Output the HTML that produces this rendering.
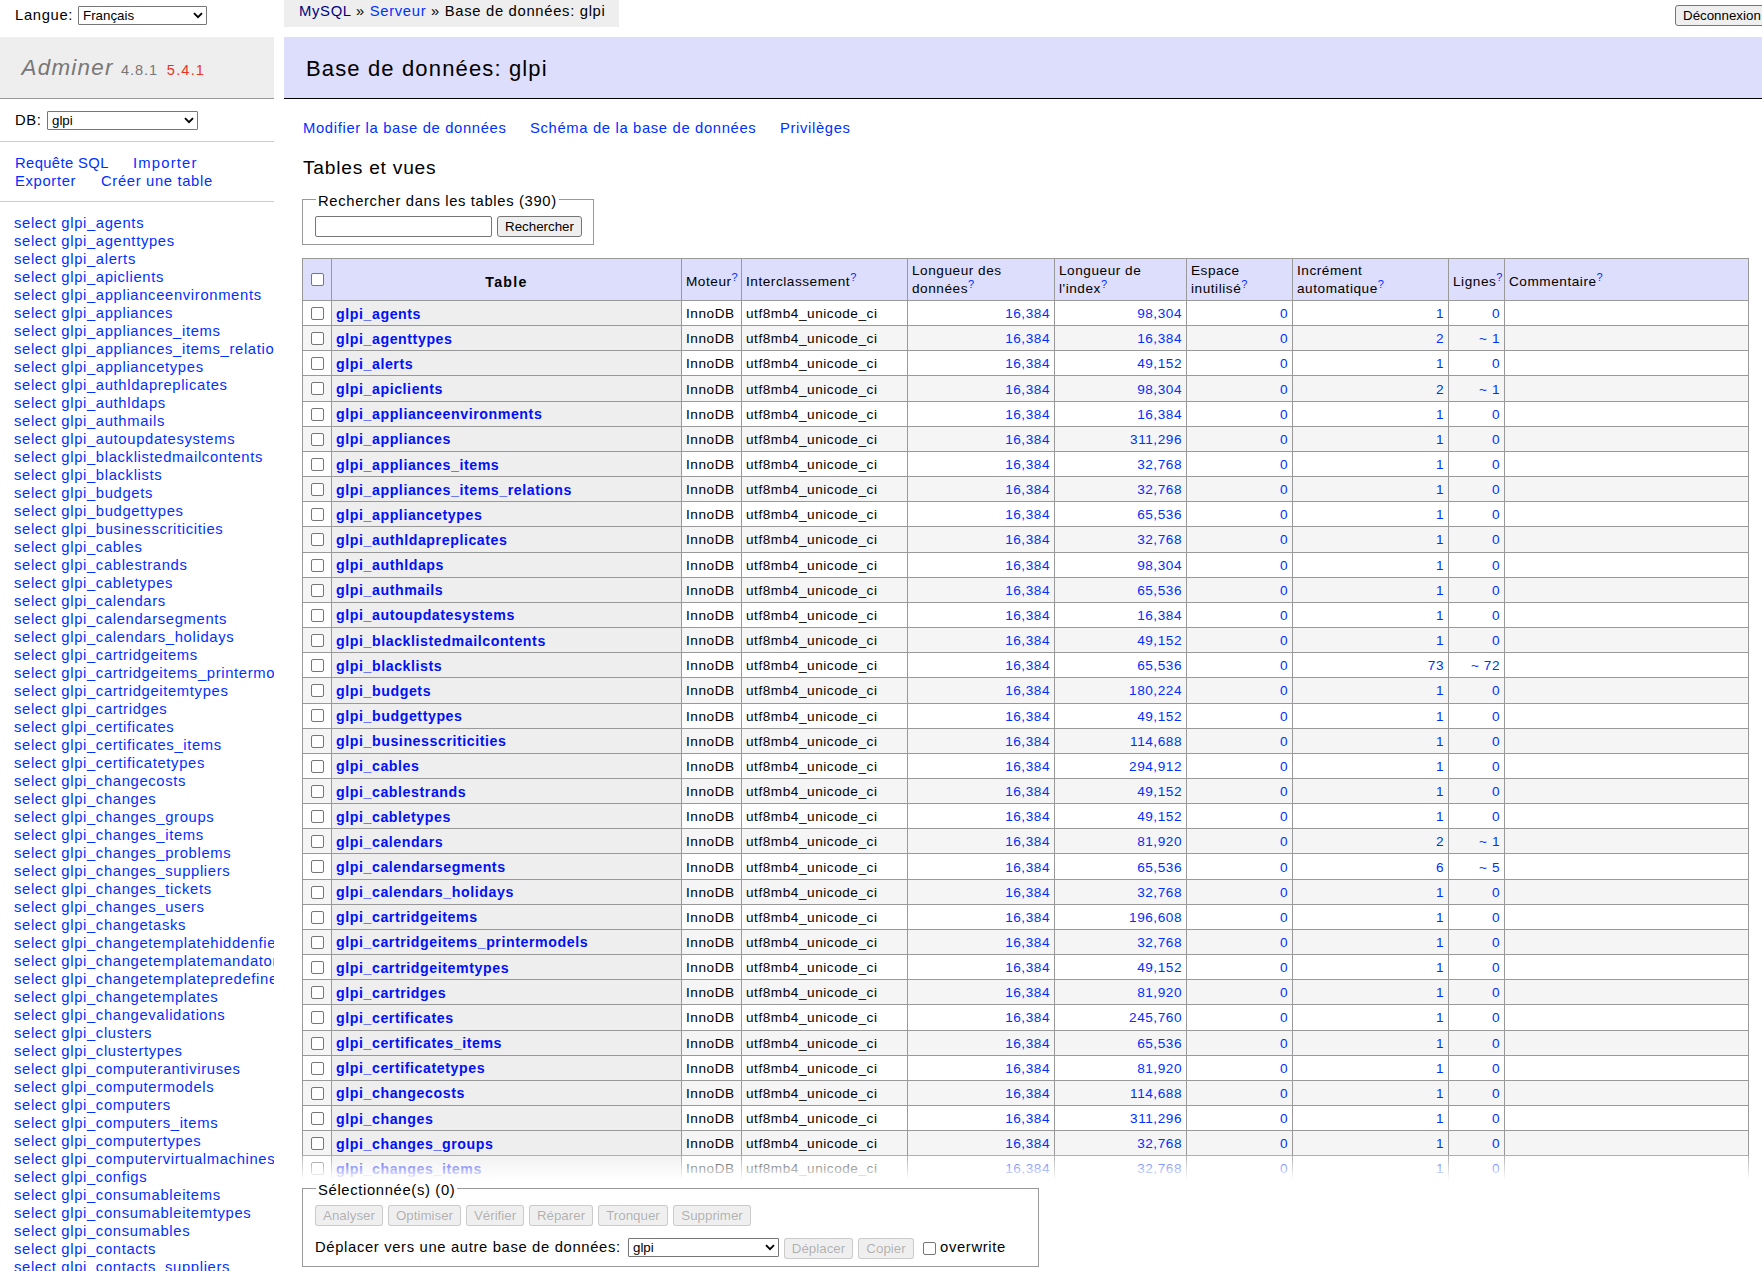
<!DOCTYPE html>
<html lang="fr"><head><meta charset="utf-8"><title>Adminer</title>
<style>
html, body { margin: 0; padding: 0; }
body { width: 1762px; height: 1271px; overflow: hidden; position: relative; background: #fff; color: #000;
  font-family: "Liberation Sans", sans-serif; font-size: 14.8px; line-height: 18px; letter-spacing: 0.044em; }
a { color: #0030ff; text-decoration: none; }
a.v { color: #000080; }
.abs { position: absolute; }
/* selects & buttons */
.sel { position: absolute; box-sizing: border-box; border: 1px solid #767676; border-radius: 1px; background: #fff;
  font-size: 13.33px; letter-spacing: 0; line-height: 17px; color: #000; padding-left: 4px; white-space: nowrap; }
.sel .arr { position: absolute; top: 50%; right: 3.5px; width: 10px; height: 7px; margin-top: -4px; }
.btn { position: absolute; box-sizing: border-box; border: 1px solid #767676; border-radius: 3px; background: #efefef;
  font-size: 13.33px; letter-spacing: 0; line-height: 18px; color: #000; text-align: center; white-space: nowrap; }
.btn.dis { border-color: rgba(118,118,118,0.3); background: #efefef; color: rgba(16,16,16,0.3); line-height: 19px; }
.inp { position: absolute; box-sizing: border-box; border: 1px solid #767676; border-radius: 2px; background: #fff; }
.chk { display: inline-block; box-sizing: border-box; width: 13px; height: 13px; border: 1px solid #767676; border-radius: 2px; background: #fff; }

/* menu */
#h1 { position: absolute; left: 0; top: 37px; width: 274px; height: 61px; background: #eee; border-bottom: 1px solid #999; }
#h1 .t { position: absolute; left: 21.6px; top: 0; line-height: 61px; font-size: 22.4px; font-style: italic; color: #777; letter-spacing: 0.055em; white-space: nowrap; }
#h1 .t .ver { font-size: 14.6px; font-style: normal; color: #777; letter-spacing: 0.06em; }
#h1 .t .nv { font-size: 14.6px; font-style: normal; color: #ea3323; letter-spacing: 0.08em; margin-left: 1.5px; }
.hr { position: absolute; left: 0; width: 274px; height: 1px; background: #ccc; }
#tables { position: absolute; left: 0; top: 214px; width: 274px; overflow: hidden; margin: 0; padding: 0; list-style: none; white-space: nowrap; }
#tables li { height: 18px; line-height: 18px; padding-left: 14px; }

/* content */
#breadcrumb { position: absolute; left: 284px; top: 0; width: 335px; height: 27px; background: #eee; white-space: nowrap; }
#breadcrumb span { position: absolute; left: 15px; top: 2px; letter-spacing: 0.046em; line-height: 18px; }
#h2 { position: absolute; left: 284px; top: 37px; width: 1478px; height: 61px; background: #ddddfc; border-bottom: 1px solid #000; }
#h2 span { position: absolute; left: 22px; top: 1px; line-height: 61px; font-size: 22px; letter-spacing: 0.052em; white-space: nowrap; }
.links a { position: absolute; white-space: nowrap; }
h3 { position: absolute; margin: 0; font-weight: normal; font-size: 19.2px; letter-spacing: 0.04em; white-space: nowrap; }
fieldset { position: absolute; box-sizing: border-box; margin: 0; padding: 0; border: 1px solid #999; }
legend { position: absolute; left: 13px; top: -8px; padding: 0 2px; background: #fff; white-space: nowrap; line-height: 18px; }

/* table */
table { position: absolute; left: 302px; top: 258px; border-collapse: collapse; table-layout: fixed; width: 1447px;
  font-size: 13.6px; letter-spacing: 0.04em; }
td, th { border: 1px solid #999; padding: 2px 4px 0; height: 25.16px; line-height: 16px; white-space: nowrap; overflow: hidden; box-sizing: border-box; }
th { background: #eee; text-align: left; font-weight: bold; }
th a { font-weight: bold; font-size: 14.2px; letter-spacing: 0.04em; color: #0010f8; }
thead th.tn { letter-spacing: 0.09em; font-size: 14.2px; }
thead th, thead td { background: #ddddfc; height: 42px; font-weight: normal; text-align: left; padding: 0 4px; line-height: 18px; white-space: normal; vertical-align: middle; }
thead th.tn { text-align: center; font-weight: bold; }
tbody tr.even td { background: #f5f5f5; }
td.n { text-align: right; }
td.cb { padding: 0; text-align: center; }
td.cb .chk { vertical-align: middle; margin-top: 0px; }
sup { font-size: 11px; line-height: 0; vertical-align: 5px; letter-spacing: 0; }
thead .s1 { padding-top: 5px; }
sup a { color: #0030ff; }

/* footer */
#fade { position: absolute; left: 284px; top: 1155px; width: 1478px; height: 25px;
  background: linear-gradient(rgba(255,255,255,0.2), #fff); }
#footer { position: absolute; left: 284px; top: 1180px; width: 1478px; height: 91px; background: #fff; }

</style></head>
<body>
<div id="lang">
  <span class="abs" style="left:15px;top:6px;">Langue:</span>
  <div class="sel" style="left:78px;top:6px;width:129px;height:19px;">Français<svg class="arr" viewBox="0 0 10 7"><path d="M1 1.2 L5 5.2 L9 1.2" fill="none" stroke="#000" stroke-width="1.9"/></svg></div>
</div>
<div class="btn" style="left:1675px;top:5px;width:110px;height:21px;text-align:left;padding-left:7px;line-height:20px;">Déconnexion</div>

<div id="h1"><span class="t">Adminer <span class="ver">4.8.1</span> <span class="nv">5.4.1</span></span></div>
<span class="abs" style="left:15px;top:111px;">DB:</span>
<div class="sel" style="left:47px;top:111px;width:151px;height:19px;">glpi<svg class="arr" viewBox="0 0 10 7"><path d="M1 1.2 L5 5.2 L9 1.2" fill="none" stroke="#000" stroke-width="1.9"/></svg></div>
<div class="hr" style="top:141px;"></div>
<div class="links">
  <a href="#" style="left:15px;top:154px;letter-spacing:0.025em;">Requête SQL</a>
  <a href="#" style="left:133px;top:154px;letter-spacing:0.08em;">Importer</a>
  <a href="#" style="left:15px;top:172px;">Exporter</a>
  <a href="#" style="left:101px;top:172px;">Créer une table</a>
</div>
<div class="hr" style="top:201px;"></div>
<ul id="tables">
<li><a href="#">select glpi_agents</a></li>
<li><a href="#">select glpi_agenttypes</a></li>
<li><a href="#">select glpi_alerts</a></li>
<li><a href="#">select glpi_apiclients</a></li>
<li><a href="#">select glpi_applianceenvironments</a></li>
<li><a href="#">select glpi_appliances</a></li>
<li><a href="#">select glpi_appliances_items</a></li>
<li><a href="#">select glpi_appliances_items_relations</a></li>
<li><a href="#">select glpi_appliancetypes</a></li>
<li><a href="#">select glpi_authldapreplicates</a></li>
<li><a href="#">select glpi_authldaps</a></li>
<li><a href="#">select glpi_authmails</a></li>
<li><a href="#">select glpi_autoupdatesystems</a></li>
<li><a href="#">select glpi_blacklistedmailcontents</a></li>
<li><a href="#">select glpi_blacklists</a></li>
<li><a href="#">select glpi_budgets</a></li>
<li><a href="#">select glpi_budgettypes</a></li>
<li><a href="#">select glpi_businesscriticities</a></li>
<li><a href="#">select glpi_cables</a></li>
<li><a href="#">select glpi_cablestrands</a></li>
<li><a href="#">select glpi_cabletypes</a></li>
<li><a href="#">select glpi_calendars</a></li>
<li><a href="#">select glpi_calendarsegments</a></li>
<li><a href="#">select glpi_calendars_holidays</a></li>
<li><a href="#">select glpi_cartridgeitems</a></li>
<li><a href="#">select glpi_cartridgeitems_printermodels</a></li>
<li><a href="#">select glpi_cartridgeitemtypes</a></li>
<li><a href="#">select glpi_cartridges</a></li>
<li><a href="#">select glpi_certificates</a></li>
<li><a href="#">select glpi_certificates_items</a></li>
<li><a href="#">select glpi_certificatetypes</a></li>
<li><a href="#">select glpi_changecosts</a></li>
<li><a href="#">select glpi_changes</a></li>
<li><a href="#">select glpi_changes_groups</a></li>
<li><a href="#">select glpi_changes_items</a></li>
<li><a href="#">select glpi_changes_problems</a></li>
<li><a href="#">select glpi_changes_suppliers</a></li>
<li><a href="#">select glpi_changes_tickets</a></li>
<li><a href="#">select glpi_changes_users</a></li>
<li><a href="#">select glpi_changetasks</a></li>
<li><a href="#">select glpi_changetemplatehiddenfields</a></li>
<li><a href="#">select glpi_changetemplatemandatoryfields</a></li>
<li><a href="#">select glpi_changetemplatepredefinedfields</a></li>
<li><a href="#">select glpi_changetemplates</a></li>
<li><a href="#">select glpi_changevalidations</a></li>
<li><a href="#">select glpi_clusters</a></li>
<li><a href="#">select glpi_clustertypes</a></li>
<li><a href="#">select glpi_computerantiviruses</a></li>
<li><a href="#">select glpi_computermodels</a></li>
<li><a href="#">select glpi_computers</a></li>
<li><a href="#">select glpi_computers_items</a></li>
<li><a href="#">select glpi_computertypes</a></li>
<li><a href="#">select glpi_computervirtualmachines</a></li>
<li><a href="#">select glpi_configs</a></li>
<li><a href="#">select glpi_consumableitems</a></li>
<li><a href="#">select glpi_consumableitemtypes</a></li>
<li><a href="#">select glpi_consumables</a></li>
<li><a href="#">select glpi_contacts</a></li>
<li><a href="#">select glpi_contacts_suppliers</a></li>
</ul>

<div id="breadcrumb"><span><a class="v" href="#">MySQL</a> » <a href="#">Serveur</a> » Base de données: glpi</span></div>
<div id="h2"><span>Base de données: glpi</span></div>
<div class="links">
  <a href="#" style="left:303px;top:119px;">Modifier la base de données</a>
  <a href="#" style="left:530px;top:119px;">Schéma de la base de données</a>
  <a href="#" style="left:780px;top:119px;">Privilèges</a>
</div>
<h3 style="left:303px;top:159px;">Tables et vues</h3>
<fieldset style="left:302px;top:199px;width:292px;height:46px;">
  <legend>Rechercher dans les tables (390)</legend>
  <div class="inp" style="left:12px;top:16px;width:177px;height:21px;"></div>
  <div class="btn" style="left:194px;top:16px;width:85px;height:21px;line-height:20px;">Rechercher</div>
</fieldset>

<table>
<colgroup><col style="width:29px"><col style="width:350px"><col style="width:60px"><col style="width:166px"><col style="width:147px"><col style="width:132px"><col style="width:106px"><col style="width:156px"><col style="width:56px"><col style="width:244px"></colgroup>
<thead><tr>
<td class="cb"><span class="chk"></span></td>
<th class="tn s1">Table</th>
<td class="s1">Moteur<sup><a href="#">?</a></sup></td>
<td class="s1">Interclassement<sup><a href="#">?</a></sup></td>
<td>Longueur des données<sup><a href="#">?</a></sup></td>
<td>Longueur de l'index<sup><a href="#">?</a></sup></td>
<td>Espace inutilisé<sup><a href="#">?</a></sup></td>
<td>Incrément automatique<sup><a href="#">?</a></sup></td>
<td class="s1">Lignes<sup><a href="#">?</a></sup></td>
<td class="s1">Commentaire<sup><a href="#">?</a></sup></td>
</tr></thead>
<tbody>
<tr><td class="cb"><span class="chk"></span></td><th><a href="#">glpi_agents</a></th><td>InnoDB</td><td>utf8mb4_unicode_ci</td><td class="n"><a href="#">16,384</a></td><td class="n"><a href="#">98,304</a></td><td class="n"><a href="#">0</a></td><td class="n"><a href="#">1</a></td><td class="n"><a href="#">0</a></td><td></td></tr>
<tr class="even"><td class="cb"><span class="chk"></span></td><th><a href="#">glpi_agenttypes</a></th><td>InnoDB</td><td>utf8mb4_unicode_ci</td><td class="n"><a href="#">16,384</a></td><td class="n"><a href="#">16,384</a></td><td class="n"><a href="#">0</a></td><td class="n"><a href="#">2</a></td><td class="n"><a href="#">~ 1</a></td><td></td></tr>
<tr><td class="cb"><span class="chk"></span></td><th><a href="#">glpi_alerts</a></th><td>InnoDB</td><td>utf8mb4_unicode_ci</td><td class="n"><a href="#">16,384</a></td><td class="n"><a href="#">49,152</a></td><td class="n"><a href="#">0</a></td><td class="n"><a href="#">1</a></td><td class="n"><a href="#">0</a></td><td></td></tr>
<tr class="even"><td class="cb"><span class="chk"></span></td><th><a href="#">glpi_apiclients</a></th><td>InnoDB</td><td>utf8mb4_unicode_ci</td><td class="n"><a href="#">16,384</a></td><td class="n"><a href="#">98,304</a></td><td class="n"><a href="#">0</a></td><td class="n"><a href="#">2</a></td><td class="n"><a href="#">~ 1</a></td><td></td></tr>
<tr><td class="cb"><span class="chk"></span></td><th><a href="#">glpi_applianceenvironments</a></th><td>InnoDB</td><td>utf8mb4_unicode_ci</td><td class="n"><a href="#">16,384</a></td><td class="n"><a href="#">16,384</a></td><td class="n"><a href="#">0</a></td><td class="n"><a href="#">1</a></td><td class="n"><a href="#">0</a></td><td></td></tr>
<tr class="even"><td class="cb"><span class="chk"></span></td><th><a href="#">glpi_appliances</a></th><td>InnoDB</td><td>utf8mb4_unicode_ci</td><td class="n"><a href="#">16,384</a></td><td class="n"><a href="#">311,296</a></td><td class="n"><a href="#">0</a></td><td class="n"><a href="#">1</a></td><td class="n"><a href="#">0</a></td><td></td></tr>
<tr><td class="cb"><span class="chk"></span></td><th><a href="#">glpi_appliances_items</a></th><td>InnoDB</td><td>utf8mb4_unicode_ci</td><td class="n"><a href="#">16,384</a></td><td class="n"><a href="#">32,768</a></td><td class="n"><a href="#">0</a></td><td class="n"><a href="#">1</a></td><td class="n"><a href="#">0</a></td><td></td></tr>
<tr class="even"><td class="cb"><span class="chk"></span></td><th><a href="#">glpi_appliances_items_relations</a></th><td>InnoDB</td><td>utf8mb4_unicode_ci</td><td class="n"><a href="#">16,384</a></td><td class="n"><a href="#">32,768</a></td><td class="n"><a href="#">0</a></td><td class="n"><a href="#">1</a></td><td class="n"><a href="#">0</a></td><td></td></tr>
<tr><td class="cb"><span class="chk"></span></td><th><a href="#">glpi_appliancetypes</a></th><td>InnoDB</td><td>utf8mb4_unicode_ci</td><td class="n"><a href="#">16,384</a></td><td class="n"><a href="#">65,536</a></td><td class="n"><a href="#">0</a></td><td class="n"><a href="#">1</a></td><td class="n"><a href="#">0</a></td><td></td></tr>
<tr class="even"><td class="cb"><span class="chk"></span></td><th><a href="#">glpi_authldapreplicates</a></th><td>InnoDB</td><td>utf8mb4_unicode_ci</td><td class="n"><a href="#">16,384</a></td><td class="n"><a href="#">32,768</a></td><td class="n"><a href="#">0</a></td><td class="n"><a href="#">1</a></td><td class="n"><a href="#">0</a></td><td></td></tr>
<tr><td class="cb"><span class="chk"></span></td><th><a href="#">glpi_authldaps</a></th><td>InnoDB</td><td>utf8mb4_unicode_ci</td><td class="n"><a href="#">16,384</a></td><td class="n"><a href="#">98,304</a></td><td class="n"><a href="#">0</a></td><td class="n"><a href="#">1</a></td><td class="n"><a href="#">0</a></td><td></td></tr>
<tr class="even"><td class="cb"><span class="chk"></span></td><th><a href="#">glpi_authmails</a></th><td>InnoDB</td><td>utf8mb4_unicode_ci</td><td class="n"><a href="#">16,384</a></td><td class="n"><a href="#">65,536</a></td><td class="n"><a href="#">0</a></td><td class="n"><a href="#">1</a></td><td class="n"><a href="#">0</a></td><td></td></tr>
<tr><td class="cb"><span class="chk"></span></td><th><a href="#">glpi_autoupdatesystems</a></th><td>InnoDB</td><td>utf8mb4_unicode_ci</td><td class="n"><a href="#">16,384</a></td><td class="n"><a href="#">16,384</a></td><td class="n"><a href="#">0</a></td><td class="n"><a href="#">1</a></td><td class="n"><a href="#">0</a></td><td></td></tr>
<tr class="even"><td class="cb"><span class="chk"></span></td><th><a href="#">glpi_blacklistedmailcontents</a></th><td>InnoDB</td><td>utf8mb4_unicode_ci</td><td class="n"><a href="#">16,384</a></td><td class="n"><a href="#">49,152</a></td><td class="n"><a href="#">0</a></td><td class="n"><a href="#">1</a></td><td class="n"><a href="#">0</a></td><td></td></tr>
<tr><td class="cb"><span class="chk"></span></td><th><a href="#">glpi_blacklists</a></th><td>InnoDB</td><td>utf8mb4_unicode_ci</td><td class="n"><a href="#">16,384</a></td><td class="n"><a href="#">65,536</a></td><td class="n"><a href="#">0</a></td><td class="n"><a href="#">73</a></td><td class="n"><a href="#">~ 72</a></td><td></td></tr>
<tr class="even"><td class="cb"><span class="chk"></span></td><th><a href="#">glpi_budgets</a></th><td>InnoDB</td><td>utf8mb4_unicode_ci</td><td class="n"><a href="#">16,384</a></td><td class="n"><a href="#">180,224</a></td><td class="n"><a href="#">0</a></td><td class="n"><a href="#">1</a></td><td class="n"><a href="#">0</a></td><td></td></tr>
<tr><td class="cb"><span class="chk"></span></td><th><a href="#">glpi_budgettypes</a></th><td>InnoDB</td><td>utf8mb4_unicode_ci</td><td class="n"><a href="#">16,384</a></td><td class="n"><a href="#">49,152</a></td><td class="n"><a href="#">0</a></td><td class="n"><a href="#">1</a></td><td class="n"><a href="#">0</a></td><td></td></tr>
<tr class="even"><td class="cb"><span class="chk"></span></td><th><a href="#">glpi_businesscriticities</a></th><td>InnoDB</td><td>utf8mb4_unicode_ci</td><td class="n"><a href="#">16,384</a></td><td class="n"><a href="#">114,688</a></td><td class="n"><a href="#">0</a></td><td class="n"><a href="#">1</a></td><td class="n"><a href="#">0</a></td><td></td></tr>
<tr><td class="cb"><span class="chk"></span></td><th><a href="#">glpi_cables</a></th><td>InnoDB</td><td>utf8mb4_unicode_ci</td><td class="n"><a href="#">16,384</a></td><td class="n"><a href="#">294,912</a></td><td class="n"><a href="#">0</a></td><td class="n"><a href="#">1</a></td><td class="n"><a href="#">0</a></td><td></td></tr>
<tr class="even"><td class="cb"><span class="chk"></span></td><th><a href="#">glpi_cablestrands</a></th><td>InnoDB</td><td>utf8mb4_unicode_ci</td><td class="n"><a href="#">16,384</a></td><td class="n"><a href="#">49,152</a></td><td class="n"><a href="#">0</a></td><td class="n"><a href="#">1</a></td><td class="n"><a href="#">0</a></td><td></td></tr>
<tr><td class="cb"><span class="chk"></span></td><th><a href="#">glpi_cabletypes</a></th><td>InnoDB</td><td>utf8mb4_unicode_ci</td><td class="n"><a href="#">16,384</a></td><td class="n"><a href="#">49,152</a></td><td class="n"><a href="#">0</a></td><td class="n"><a href="#">1</a></td><td class="n"><a href="#">0</a></td><td></td></tr>
<tr class="even"><td class="cb"><span class="chk"></span></td><th><a href="#">glpi_calendars</a></th><td>InnoDB</td><td>utf8mb4_unicode_ci</td><td class="n"><a href="#">16,384</a></td><td class="n"><a href="#">81,920</a></td><td class="n"><a href="#">0</a></td><td class="n"><a href="#">2</a></td><td class="n"><a href="#">~ 1</a></td><td></td></tr>
<tr><td class="cb"><span class="chk"></span></td><th><a href="#">glpi_calendarsegments</a></th><td>InnoDB</td><td>utf8mb4_unicode_ci</td><td class="n"><a href="#">16,384</a></td><td class="n"><a href="#">65,536</a></td><td class="n"><a href="#">0</a></td><td class="n"><a href="#">6</a></td><td class="n"><a href="#">~ 5</a></td><td></td></tr>
<tr class="even"><td class="cb"><span class="chk"></span></td><th><a href="#">glpi_calendars_holidays</a></th><td>InnoDB</td><td>utf8mb4_unicode_ci</td><td class="n"><a href="#">16,384</a></td><td class="n"><a href="#">32,768</a></td><td class="n"><a href="#">0</a></td><td class="n"><a href="#">1</a></td><td class="n"><a href="#">0</a></td><td></td></tr>
<tr><td class="cb"><span class="chk"></span></td><th><a href="#">glpi_cartridgeitems</a></th><td>InnoDB</td><td>utf8mb4_unicode_ci</td><td class="n"><a href="#">16,384</a></td><td class="n"><a href="#">196,608</a></td><td class="n"><a href="#">0</a></td><td class="n"><a href="#">1</a></td><td class="n"><a href="#">0</a></td><td></td></tr>
<tr class="even"><td class="cb"><span class="chk"></span></td><th><a href="#">glpi_cartridgeitems_printermodels</a></th><td>InnoDB</td><td>utf8mb4_unicode_ci</td><td class="n"><a href="#">16,384</a></td><td class="n"><a href="#">32,768</a></td><td class="n"><a href="#">0</a></td><td class="n"><a href="#">1</a></td><td class="n"><a href="#">0</a></td><td></td></tr>
<tr><td class="cb"><span class="chk"></span></td><th><a href="#">glpi_cartridgeitemtypes</a></th><td>InnoDB</td><td>utf8mb4_unicode_ci</td><td class="n"><a href="#">16,384</a></td><td class="n"><a href="#">49,152</a></td><td class="n"><a href="#">0</a></td><td class="n"><a href="#">1</a></td><td class="n"><a href="#">0</a></td><td></td></tr>
<tr class="even"><td class="cb"><span class="chk"></span></td><th><a href="#">glpi_cartridges</a></th><td>InnoDB</td><td>utf8mb4_unicode_ci</td><td class="n"><a href="#">16,384</a></td><td class="n"><a href="#">81,920</a></td><td class="n"><a href="#">0</a></td><td class="n"><a href="#">1</a></td><td class="n"><a href="#">0</a></td><td></td></tr>
<tr><td class="cb"><span class="chk"></span></td><th><a href="#">glpi_certificates</a></th><td>InnoDB</td><td>utf8mb4_unicode_ci</td><td class="n"><a href="#">16,384</a></td><td class="n"><a href="#">245,760</a></td><td class="n"><a href="#">0</a></td><td class="n"><a href="#">1</a></td><td class="n"><a href="#">0</a></td><td></td></tr>
<tr class="even"><td class="cb"><span class="chk"></span></td><th><a href="#">glpi_certificates_items</a></th><td>InnoDB</td><td>utf8mb4_unicode_ci</td><td class="n"><a href="#">16,384</a></td><td class="n"><a href="#">65,536</a></td><td class="n"><a href="#">0</a></td><td class="n"><a href="#">1</a></td><td class="n"><a href="#">0</a></td><td></td></tr>
<tr><td class="cb"><span class="chk"></span></td><th><a href="#">glpi_certificatetypes</a></th><td>InnoDB</td><td>utf8mb4_unicode_ci</td><td class="n"><a href="#">16,384</a></td><td class="n"><a href="#">81,920</a></td><td class="n"><a href="#">0</a></td><td class="n"><a href="#">1</a></td><td class="n"><a href="#">0</a></td><td></td></tr>
<tr class="even"><td class="cb"><span class="chk"></span></td><th><a href="#">glpi_changecosts</a></th><td>InnoDB</td><td>utf8mb4_unicode_ci</td><td class="n"><a href="#">16,384</a></td><td class="n"><a href="#">114,688</a></td><td class="n"><a href="#">0</a></td><td class="n"><a href="#">1</a></td><td class="n"><a href="#">0</a></td><td></td></tr>
<tr><td class="cb"><span class="chk"></span></td><th><a href="#">glpi_changes</a></th><td>InnoDB</td><td>utf8mb4_unicode_ci</td><td class="n"><a href="#">16,384</a></td><td class="n"><a href="#">311,296</a></td><td class="n"><a href="#">0</a></td><td class="n"><a href="#">1</a></td><td class="n"><a href="#">0</a></td><td></td></tr>
<tr class="even"><td class="cb"><span class="chk"></span></td><th><a href="#">glpi_changes_groups</a></th><td>InnoDB</td><td>utf8mb4_unicode_ci</td><td class="n"><a href="#">16,384</a></td><td class="n"><a href="#">32,768</a></td><td class="n"><a href="#">0</a></td><td class="n"><a href="#">1</a></td><td class="n"><a href="#">0</a></td><td></td></tr>
<tr><td class="cb"><span class="chk"></span></td><th><a href="#">glpi_changes_items</a></th><td>InnoDB</td><td>utf8mb4_unicode_ci</td><td class="n"><a href="#">16,384</a></td><td class="n"><a href="#">32,768</a></td><td class="n"><a href="#">0</a></td><td class="n"><a href="#">1</a></td><td class="n"><a href="#">0</a></td><td></td></tr>
<tr class="even"><td class="cb"><span class="chk"></span></td><th><a href="#">glpi_changes_problems</a></th><td>InnoDB</td><td>utf8mb4_unicode_ci</td><td class="n"><a href="#">16,384</a></td><td class="n"><a href="#">32,768</a></td><td class="n"><a href="#">0</a></td><td class="n"><a href="#">1</a></td><td class="n"><a href="#">0</a></td><td></td></tr>
</tbody>
</table>

<div id="fade"></div>
<div id="footer">
<fieldset style="left:18px;top:8px;width:737px;height:79px;">
  <legend>Sélectionnée(s) (0)</legend>
  <div class="btn dis" style="left:12px;top:16px;width:68px;height:21px;">Analyser</div>
  <div class="btn dis" style="left:85px;top:16px;width:73px;height:21px;">Optimiser</div>
  <div class="btn dis" style="left:163px;top:16px;width:58px;height:21px;">Vérifier</div>
  <div class="btn dis" style="left:226px;top:16px;width:64px;height:21px;">Réparer</div>
  <div class="btn dis" style="left:295px;top:16px;width:70px;height:21px;">Tronquer</div>
  <div class="btn dis" style="left:370px;top:16px;width:78px;height:21px;">Supprimer</div>
  <span class="abs" style="left:12px;top:49px;">Déplacer vers une autre base de données:</span>
  <div class="sel" style="left:325px;top:49px;width:151px;height:19px;">glpi<svg class="arr" viewBox="0 0 10 7"><path d="M1 1.2 L5 5.2 L9 1.2" fill="none" stroke="#000" stroke-width="1.9"/></svg></div>
  <div class="btn dis" style="left:481px;top:49px;width:69px;height:21px;">Déplacer</div>
  <div class="btn dis" style="left:555px;top:49px;width:56px;height:21px;">Copier</div>
  <span class="chk abs" style="left:620px;top:53px;"></span>
  <span class="abs" style="left:637px;top:49px;">overwrite</span>
</fieldset>
</div>

</body></html>
